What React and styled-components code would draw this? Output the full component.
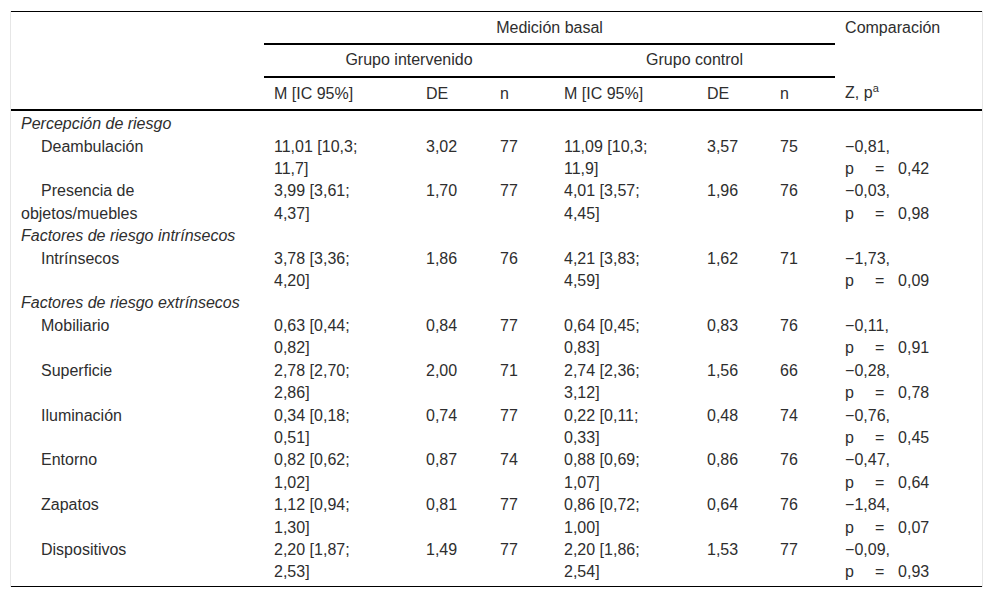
import React from "react";
import styled, { createGlobalStyle } from "styled-components";

const GlobalStyle = createGlobalStyle`
  body {
    margin: 0;
    background: #ffffff;
    font-family: "Liberation Sans", Arial, sans-serif;
  }
`;

const Frame = styled.div`
  margin: 11px 10px 0 10px;
  width: 971px;
  border-left: 1px solid #e6e6e6;
  border-right: 1px solid #e6e6e6;
`;

const Table = styled.table`
  width: 971px;
  table-layout: fixed;
  border-collapse: collapse;
  border-top: 1px solid #000;
  border-bottom: 1px solid #000;
  font-size: 16px;
  line-height: 22.4px;
  color: #2e2e2e;
`;

const HeadCell = styled.th`
  font-weight: normal;
  text-align: ${(p) => (p.$center ? "center" : "left")};
  vertical-align: top;
  padding: 4px 10px 4px 10px;
  border-bottom: ${(p) => (p.$rule ? "2px solid #000" : "none")};
`;

const HeadRow = styled.tr`
  &:first-child th {
    padding-top: 5px;
  }
  &:last-child th {
    padding-top: 5px;
    border-bottom: 2px solid #000;
  }
`;

const Cell = styled.td`
  vertical-align: top;
  padding: 0 10px;
  white-space: nowrap;
`;

const LabelCell = styled.td`
  vertical-align: top;
  padding: 0 10px;
  text-indent: 20px;
`;

const CategoryCell = styled.td`
  padding: 0 10px;
  font-style: italic;
`;

const BodyRow = styled.tr`
  &:first-child td {
    padding-top: 2px;
  }
  &:last-child td {
    padding-bottom: 2px;
  }
`;

const PLine = styled.div`
  display: flex;
`;

const Sym = styled.span`
  display: inline-block;
  width: ${(p) => p.$w}px;
`;

const Sup = styled.sup`
  font-size: 11px;
  line-height: 0;
  vertical-align: 6px;
`;

const widths = [253, 152, 74, 64, 143, 73, 65, 147];

const sections = [
  {
    title: "Percepción de riesgo",
    rows: [
      ["Deambulación", ["11,01 [10,3;", "11,7]"], "3,02", "77", ["11,09 [10,3;", "11,9]"], "3,57", "75", "−0,81,", "0,42"],
      ["Presencia de objetos/muebles", ["3,99 [3,61;", "4,37]"], "1,70", "77", ["4,01 [3,57;", "4,45]"], "1,96", "76", "−0,03,", "0,98"],
    ],
  },
  {
    title: "Factores de riesgo intrínsecos",
    rows: [
      ["Intrínsecos", ["3,78 [3,36;", "4,20]"], "1,86", "76", ["4,21 [3,83;", "4,59]"], "1,62", "71", "−1,73,", "0,09"],
    ],
  },
  {
    title: "Factores de riesgo extrínsecos",
    rows: [
      ["Mobiliario", ["0,63 [0,44;", "0,82]"], "0,84", "77", ["0,64 [0,45;", "0,83]"], "0,83", "76", "−0,11,", "0,91"],
      ["Superficie", ["2,78 [2,70;", "2,86]"], "2,00", "71", ["2,74 [2,36;", "3,12]"], "1,56", "66", "−0,28,", "0,78"],
      ["Iluminación", ["0,34 [0,18;", "0,51]"], "0,74", "77", ["0,22 [0,11;", "0,33]"], "0,48", "74", "−0,76,", "0,45"],
      ["Entorno", ["0,82 [0,62;", "1,02]"], "0,87", "74", ["0,88 [0,69;", "1,07]"], "0,86", "76", "−0,47,", "0,64"],
      ["Zapatos", ["1,12 [0,94;", "1,30]"], "0,81", "77", ["0,86 [0,72;", "1,00]"], "0,64", "76", "−1,84,", "0,07"],
      ["Dispositivos", ["2,20 [1,87;", "2,53]"], "1,49", "77", ["2,20 [1,86;", "2,54]"], "1,53", "77", "−0,09,", "0,93"],
    ],
  },
];

const Ci = ({ lines }) => (
  <>
    {lines[0]}
    <br />
    {lines[1]}
  </>
);

export default function App() {
  return (
    <>
      <GlobalStyle />
      <Frame>
        <Table>
          <colgroup>
            {widths.map((w, i) => (
              <col key={i} style={{ width: w }} />
            ))}
          </colgroup>
          <thead>
            <HeadRow>
              <HeadCell />
              <HeadCell colSpan={6} $center $rule>
                Medición basal
              </HeadCell>
              <HeadCell>Comparación</HeadCell>
            </HeadRow>
            <HeadRow>
              <HeadCell />
              <HeadCell colSpan={3} $center $rule>
                Grupo intervenido
              </HeadCell>
              <HeadCell colSpan={3} $center $rule>
                Grupo control
              </HeadCell>
              <HeadCell />
            </HeadRow>
            <HeadRow>
              <HeadCell />
              <HeadCell>M [IC 95%]</HeadCell>
              <HeadCell>DE</HeadCell>
              <HeadCell>n</HeadCell>
              <HeadCell>M [IC 95%]</HeadCell>
              <HeadCell>DE</HeadCell>
              <HeadCell>n</HeadCell>
              <HeadCell>
                Z, p<Sup>a</Sup>
              </HeadCell>
            </HeadRow>
          </thead>
          <tbody>
            {sections.map((s) => (
              <React.Fragment key={s.title}>
                <BodyRow>
                  <CategoryCell colSpan={8}>{s.title}</CategoryCell>
                </BodyRow>
                {s.rows.map((r) => (
                  <BodyRow key={r[0]}>
                    <LabelCell>{r[0]}</LabelCell>
                    <Cell>
                      <Ci lines={r[1]} />
                    </Cell>
                    <Cell>{r[2]}</Cell>
                    <Cell>{r[3]}</Cell>
                    <Cell>
                      <Ci lines={r[4]} />
                    </Cell>
                    <Cell>{r[5]}</Cell>
                    <Cell>{r[6]}</Cell>
                    <Cell>
                      {r[7]}
                      <PLine>
                        <Sym $w={30}>p</Sym>
                        <Sym $w={23}>=</Sym>
                        <span>{r[8]}</span>
                      </PLine>
                    </Cell>
                  </BodyRow>
                ))}
              </React.Fragment>
            ))}
          </tbody>
        </Table>
      </Frame>
    </>
  );
}
